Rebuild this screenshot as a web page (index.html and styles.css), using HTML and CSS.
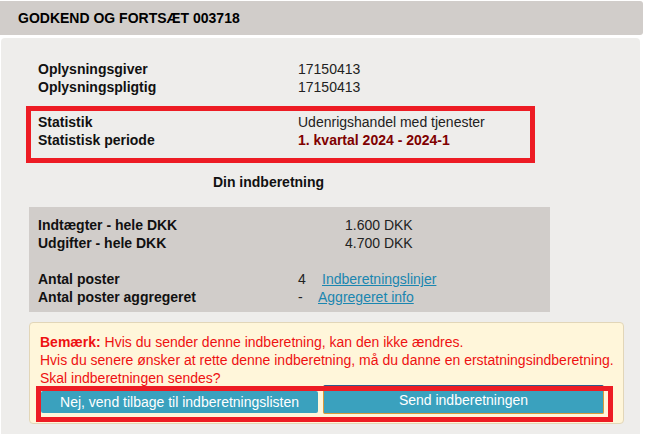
FILE: index.html
```html
<!DOCTYPE html>
<html lang="da">
<head>
    <meta charset="UTF-8" />
    <title>Godkend og fortsæt</title>
    <link rel="stylesheet" href="styles.css">
</head>
<body>
    <!-- Title bar -->
    <div class="title-bar">GODKEND OG FORTSÆT 003718</div>

    <div class="panel">
        <div class="row first">
            <div class="label">Oplysningsgiver</div>
            <div class="value">17150413</div>
        </div>
        <div class="row">
            <div class="label">Oplysningspligtig</div>
            <div class="value">17150413</div>
        </div>

        <!-- Highlighted statistics block -->
        <div class="mark stat-block">
            <div class="row">
                <div class="label">Statistik</div>
                <div class="value">Udenrigshandel med tjenester</div>
            </div>
            <div class="row">
                <div class="label">Statistisk periode</div>
                <div class="value period">1. kvartal 2024 - 2024-1</div>
            </div>
        </div>

        <div class="section-title">Din indberetning</div>

        <!-- Summary box -->
        <div class="summary">
            <div class="row">
                <div class="label">Indtægter - hele DKK</div>
                <div class="value amount">1.600 DKK</div>
            </div>
            <div class="row">
                <div class="label">Udgifter - hele DKK</div>
                <div class="value amount">4.700 DKK</div>
            </div>
            <div class="row spacer"></div>
            <div class="row">
                <div class="label">Antal poster</div>
                <div class="value"><span class="count">4</span><a href="#" class="link">Indberetningslinjer</a></div>
            </div>
            <div class="row">
                <div class="label">Antal poster aggregeret</div>
                <div class="value"><span class="count dash">-</span><a href="#" class="link">Aggregeret info</a></div>
            </div>
        </div>

        <!-- Warning and actions -->
        <div class="notice">
            <div class="notice-line"><b>Bemærk:</b> Hvis du sender denne indberetning, kan den ikke ændres.</div>
            <div class="notice-line">Hvis du senere ønsker at rette denne indberetning, må du danne en erstatningsindberetning.</div>
            <div class="notice-line">Skal indberetningen sendes?</div>

            <div class="mark actions">
                <button class="btn btn-back">Nej, vend tilbage til indberetningslisten</button>
                <button class="btn btn-send">Send indberetningen</button>
            </div>
        </div>
    </div>
</body>
</html>
```

FILE: styles.css
```css
body, html {
    margin: 0;
    padding: 0;
    height: 100%;
    overflow: hidden;
    background-color: #ffffff;
    font-family: 'Liberation Sans', Arial, sans-serif;
    font-size: 14px;
    line-height: 18px;
    color: #111111;
}

body {
    padding-top: 1px;
    box-sizing: border-box;
}

/* Top bar with the page title */
.title-bar {
    width: 643px;
    height: 34px;
    box-sizing: border-box;
    padding-left: 18px;
    display: flex;
    align-items: center;
    background-color: #d1cdca;
    border-radius: 0 3px 3px 0;
    font-weight: bold;
    color: #000000;
}

.panel {
    width: 639px;
    height: 396px;
    margin: 3px 0 0 1px;
    padding-left: 37px;
    box-sizing: border-box;
    background-color: #eeedeb;
    border-radius: 4px 4px 0 0;
}

.row {
    display: flex;
    height: 18px;
}

.row.first {
    padding-top: 22px;
}

.label {
    width: 260px;
    flex-shrink: 0;
    font-weight: bold;
    color: #111111;
}

.value {
    color: #222222;
    white-space: nowrap;
}

.period {
    font-weight: bold;
    color: #7f0000;
}

/* Red annotation frame, drawn over the content */
.mark {
    position: relative;
}

.mark::after {
    content: '';
    position: absolute;
    top: -5px;
    left: -5px;
    right: -5px;
    bottom: -5px;
    border: 5px solid #ed1c24;
    pointer-events: none;
}

.stat-block {
    width: 499px;
    margin: 15px 0 0 -7px;
    padding: 2px 0 9px 7px;
    box-sizing: border-box;
}

.section-title {
    width: 461px;
    margin-top: 15px;
    text-align: center;
    font-weight: bold;
    color: #111111;
}

.summary {
    width: 521px;
    margin: 16px 0 0 -9px;
    padding: 9px 0 6px 9px;
    box-sizing: border-box;
    background-color: #d1cdca;
}

.summary .row.spacer {
    height: 18px;
}

.amount {
    padding-left: 47px;
}

.count {
    display: inline-block;
    width: 24px;
}

.count.dash {
    width: 20px;
}

.link {
    color: #1a86b0;
    text-decoration: underline;
}

.notice {
    width: 595px;
    margin: 10px 0 0 -9px;
    padding: 10px 0 6px 10px;
    box-sizing: border-box;
    background-color: #fff6da;
    border: 1px solid #e2d6b8;
    border-radius: 4px;
    color: #ee1111;
}

.notice-line b {
    font-weight: bold;
}

.actions {
    display: flex;
    align-items: flex-start;
    gap: 5px;
    width: 567px;
    height: 26px;
    margin: 4px 0 0 1px;
}

.btn {
    font-family: 'Liberation Sans', Arial, sans-serif;
    font-size: 14px;
    color: #ffffff;
    background-color: #3aa1be;
    border: none;
    border-radius: 2px;
    padding: 0;
    cursor: pointer;
}

.btn-back {
    width: 277px;
    height: 22px;
}

.btn-send {
    width: 281px;
    height: 29px;
    margin-top: -6px;
    border: 1px solid #d99a3c;
    border-top-color: #2c5a8c;
}
```
